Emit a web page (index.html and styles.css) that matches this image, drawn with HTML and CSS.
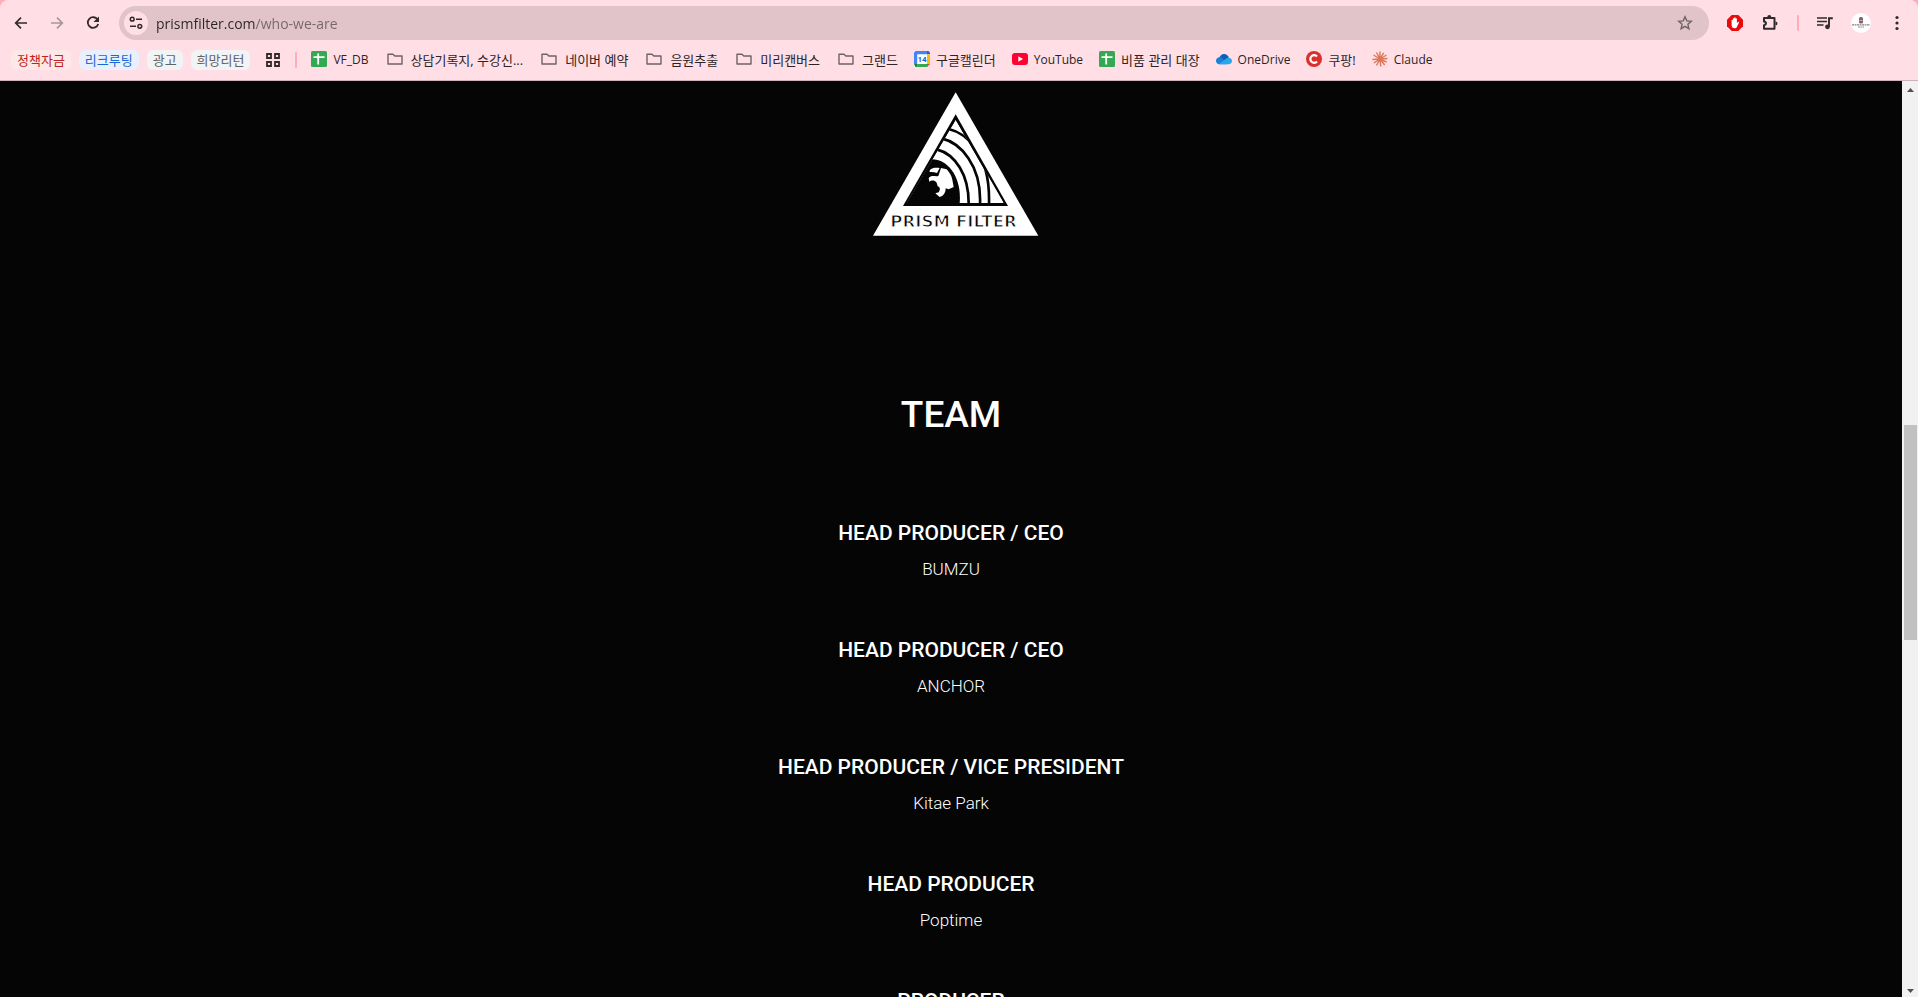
FILE: index.html
```
<!DOCTYPE html>
<html lang="ko">
<head>
<meta charset="utf-8">
<title>Prism Filter</title>
<link rel="stylesheet" href="styles.css">
</head>
<body>
<svg class="defs" aria-hidden="true">
  <symbol id="folder" viewBox="0 0 16 16"><path d="M1 3.2h5l1.8 1.8H15v8H1z" fill="none" stroke="#6d6366" stroke-width="1.4" stroke-linejoin="round"/></symbol>
  <symbol id="sheet" viewBox="0 0 16 16"><rect width="16" height="16" rx="1.5" fill="#34a853"/><path d="M2.5 6.2h11M7.2 2.5v11" stroke="#fff" stroke-width="1.8"/></symbol>
</svg>
<header class="chrome">
  <div class="toolbar">
    <nav class="nav">
      <button class="icon-btn" aria-label="뒤로"><svg viewBox="0 0 16 16"><path d="M14 8H3M8 2.700L2.700 8 8 13.300" fill="none" stroke="#302a2c" stroke-width="1.7"/></svg></button>
      <button class="icon-btn" aria-label="앞으로" disabled><svg viewBox="0 0 16 16"><path d="M2 8h11M8 2.700L13.300 8 8 13.300" fill="none" stroke="#a9959a" stroke-width="1.7"/></svg></button>
      <button class="icon-btn" aria-label="새로고침"><svg viewBox="0 0 16 16"><path d="M12.600 4.700A5.300 5.300 0 1 0 13.200 9" fill="none" stroke="#302a2c" stroke-width="1.8"/><path d="M14 1.500v5.500H8.500L14 1.500z" fill="#302a2c"/></svg></button>
    </nav>
    <form class="omnibox">
      <button type="button" class="site-info" aria-label="사이트 정보"><svg viewBox="0 0 16 16"><g fill="none" stroke="#302a2c" stroke-width="1.5"><circle cx="4.200" cy="4.200" r="1.900"/><path d="M8 4.200h6M2 11.300h6"/><circle cx="11.800" cy="11.300" r="1.900"/></g></svg></button>
      <input class="url" type="text" aria-label="주소" value="prismfilter.com/who-we-are">
      <button type="button" class="star" aria-label="북마크"><svg viewBox="0 0 16 16"><path d="M8 1.800l1.800 4.100 4.500.4-3.400 3 1 4.400L8 11.400l-3.900 2.300 1-4.400-3.400-3 4.500-.4z" fill="none" stroke="#6d6366" stroke-width="1.400"/></svg></button>
    </form>
    <div class="tools">
      <button class="icon-btn" aria-label="차단기"><svg viewBox="0 0 16 16"><path d="M4.700 0h6.600L16 4.700v6.600L11.300 16H4.700L0 11.300V4.700z" fill="#e90b0b"/><path d="M4.600 8V5.100a.7.7 0 0 1 1.300 0V3.600a.7.7 0 0 1 1.300 0V3a.7.7 0 0 1 1.400 0v.8a.7.7 0 0 1 1.300 0v4.400l1-1.200c.6-.6 1.400-.1 1.100.6l-2 4.200c-.5 1-1.200 1.500-2.300 1.500C5.600 13.300 4.600 12 4.600 10z" fill="#fff"/></svg></button>
      <button class="icon-btn extensions" aria-label="확장 프로그램"><svg viewBox="0 0 18 18"><path d="M3 4h10.500v10.800H3v-3.600c2.600-.4 2.600-3.400 0-3.800z" fill="none" stroke="#302a2c" stroke-width="2" stroke-linejoin="round"/><path d="M6.300 3a2 2 0 0 1 4 0zM14.500 7.500a2 2 0 0 1 0 4z" fill="#302a2c"/></svg></button>
      <span class="divider"></span>
      <button class="icon-btn" aria-label="미디어"><svg viewBox="0 0 16 16"><path d="M0 3h10M0 6.500h10M0 10h6.500" stroke="#302a2c" stroke-width="1.700"/><path d="M12 11.500V3.200h3.800" fill="none" stroke="#302a2c" stroke-width="1.900"/><circle cx="10.500" cy="11.800" r="2.400" fill="#302a2c"/></svg></button>
      <button class="icon-btn avatar" aria-label="프로필"><svg viewBox="0 0 20 20"><circle cx="10" cy="10" r="10" fill="#fff"/><rect x="8" y="4" width="4" height="6.500" rx="1.500" fill="#76676d"/><path d="M8.500 7.500h3" stroke="#e9a0ad"/><path d="M1 11.800h18M7 14h6" stroke="#87858a" stroke-width="1.200" stroke-dasharray="2 .5"/></svg></button>
      <button class="icon-btn" aria-label="메뉴"><svg viewBox="0 0 16 16" fill="#302a2c"><circle cx="8" cy="2.500" r="1.600"/><circle cx="8" cy="8" r="1.600"/><circle cx="8" cy="13.500" r="1.600"/></svg></button>
    </div>
  </div>
  <nav class="bookmarks">
    <button class="chip chip-red">정책자금</button>
    <button class="chip chip-blue">리크루팅</button>
    <button class="chip">광고</button>
    <button class="chip">희망리턴</button>
    <button class="apps" aria-label="탭 그룹"><svg viewBox="0 0 16 16"><path d="M2 2h4v4H2zM10 2h4v4h-4zM2 10h4v4H2zM10 10h4v4h-4z" fill="none" stroke="#302a2c" stroke-width="1.800"/></svg></button>
    <span class="divider"></span>
    <a class="mark first latin" href="#"><svg><use href="#sheet"/></svg>VF_DB</a>
    <a class="mark folder" href="#"><svg><use href="#folder"/></svg>상담기록지, 수강신...</a>
    <a class="mark folder" href="#"><svg><use href="#folder"/></svg>네이버 예약</a>
    <a class="mark folder" href="#"><svg><use href="#folder"/></svg>음원추출</a>
    <a class="mark folder" href="#"><svg><use href="#folder"/></svg>미리캔버스</a>
    <a class="mark folder" href="#"><svg><use href="#folder"/></svg>그랜드</a>
    <a class="mark" href="#"><svg viewBox="0 0 16 16"><path d="M0 0h14.500L16 1.500V12l-4 4H0z" fill="#fff"/><path d="M1.500 0H13v3.200H3.200V13H0V1.500z" fill="#4285f4"/><path d="M13 0h1.500L16 1.500v1.700h-3z" fill="#1967d2"/><path d="M13 3.200h3V13h-3z" fill="#fbbc04"/><path d="M3.200 13H13v3H3.200z" fill="#34a853"/><path d="M0 13h3.200v3H1.500z" fill="#188038"/><path d="M13 13h3l-3 3z" fill="#ea4335"/><text class="cal-day" x="8" y="11">14</text></svg>구글캘린더</a>
    <a class="mark latin" href="#"><svg viewBox="0 0 16 16"><rect y="2" width="16" height="12" rx="3" fill="#ff0033"/><path d="M6.300 5.300L11 8l-4.700 2.700z" fill="#fff"/></svg>YouTube</a>
    <a class="mark" href="#"><svg><use href="#sheet"/></svg>비품 관리 대장</a>
    <a class="mark latin" href="#"><svg viewBox="0 0 16 16"><path d="M3 8c.5-3 2.500-5 5-5 2.300 0 4 1.300 4.800 3.500L10 10H3z" fill="#0f5fb4"/><path d="M0 9.800C0 7.600 1.700 6.300 3.500 6.300c2.500 0 4 2 7.500 6.900H3.500C1.500 13.200 0 11.800 0 9.800z" fill="#1681d8"/><path d="M3 13l8-6c3-.8 5 .9 5 3.100 0 1.800-1.300 3.100-3.200 3.100H3.700z" fill="#28a8ea"/></svg>OneDrive</a>
    <a class="mark" href="#"><svg viewBox="0 0 16 16"><circle cx="8" cy="8" r="8" fill="#dc2f2b"/><path d="M11 5.500A3.800 3.800 0 1 0 11 10.500" fill="none" stroke="#fff" stroke-width="2.200"/></svg>쿠팡!</a>
    <a class="mark latin" href="#"><svg viewBox="0 0 16 16"><path d="M8 8V.5M8 8l3.700-6.200M8 8l6.500-4M8 8l7.500-.5M8 8l6.700 3.200M8 8l4.700 6M8 8l.8 7.500M8 8l-3.500 6.500M8 8l-6.200 4M8 8L.5 8.500M8 8L1.500 4M8 8L4.500 1.500" stroke="#d97757" stroke-width="1.400"/></svg>Claude</a>
  </nav>
</header>
<div class="viewport">
  <main class="page">
    <svg class="logo" viewBox="39 36 498 432" role="img" aria-label="Prism Filter">
      <path d="M287 37L535 467H39z" fill="#fff"/>
      <path d="M287 103L444 378H129z" fill="#050505"/>
      <clipPath id="inner"><path d="M287 119L431 369H140z"/></clipPath>
      <g clip-path="url(#inner)">
        <path d="M287 119L431 369H140z" fill="#fff"/>
        <path d="M318 160C345 200 375 245 388 280L440 369V300L330 140z" fill="#050505"/>
        <path d="M386 282L433 369H386z" fill="#fff"/>
        <g fill="none" stroke="#050505" stroke-width="8">
          <path d="M266 147C300 155 325 175 345 203C376 244 389 300 387 372"/>
          <path d="M247 176C300 188 365 255 360 372"/>
          <path d="M230 208C286 222 327 285 326 372"/>
        </g>
        <path d="M212 238C262 235 306 290 299 370H120z" fill="#050505"/>
      </g>
      <path d="M209 271C217 262 229 263 239 264L231 279C223 276 216 275 209 276zM243 264L260 268C270 280 275 288 277 299L281 321L266 328L257 325C257 339 250 349 239 351L231 344L226 340L236 337C243 327 239 321 233 319L230 308C221 298 214 302 208 305L206 294C214 285 225 290 235 288z" fill="#fff"/>
      <text class="logo-name" x="91" y="441">PRISM FILTER</text>
    </svg>
    <h1 class="title">TEAM</h1>
    <section class="member"><h2>HEAD PRODUCER / CEO</h2><p>BUMZU</p></section>
    <section class="member"><h2>HEAD PRODUCER / CEO</h2><p>ANCHOR</p></section>
    <section class="member"><h2>HEAD PRODUCER / VICE PRESIDENT</h2><p>Kitae Park</p></section>
    <section class="member"><h2>HEAD PRODUCER</h2><p>Poptime</p></section>
    <section class="member"><h2>PRODUCER</h2></section>
  </main>
  <div class="scrollbar" aria-hidden="true">
    <svg viewBox="0 0 16 17"><path d="M5 11l3.500-4L12 11z" fill="#505050"/></svg>
    <span class="above"></span><span class="thumb"></span><span class="below"></span>
    <svg viewBox="0 0 16 17"><path d="M5 9h7l-3.500 4z" fill="#505050"/></svg>
  </div>
</div>
</body>
</html>
```
FILE: styles.css
```
* { box-sizing: border-box; }
body {
  margin: 0;
  height: 100vh;
  display: flex;
  flex-direction: column;
  overflow: hidden;
  background: #ffabba;
  font-family: "Open Sans", "Noto Sans CJK KR", sans-serif;
}
button { border: 0; padding: 0; background: none; font: inherit; display: flex; align-items: center; justify-content: center; }
.defs { display: none; }
.chrome {
  flex: none;
  height: 81px;
  background: #ffdfe5;
  border-bottom: 1px solid #cdb2b8;
  border-radius: 8px 8px 0 0;
}
.toolbar { display: flex; align-items: center; padding: 6px 13px 0; }
.nav { display: flex; gap: 20px; }
.icon-btn { width: 16px; height: 16px; flex: none; }
.icon-btn svg, .site-info svg, .star svg, .apps svg { width: 16px; height: 16px; }
.icon-btn.extensions, .icon-btn.extensions svg { width: 18px; height: 18px; }
.icon-btn.avatar, .icon-btn.avatar svg { width: 20px; height: 20px; }
.omnibox {
  flex: 1;
  height: 34px;
  margin: 0 18px;
  padding: 0 16px 0 5px;
  display: flex;
  align-items: center;
  gap: 8px;
  border-radius: 17px;
  background: #e0c4ca;
}
.site-info { width: 24px; height: 24px; border-radius: 50%; background: #ffdfe5; }
.url {
  flex: 1;
  height: 24px;
  border: 0;
  padding: 0;
  outline: 0;
  font: 14px "Open Sans", sans-serif;
  color: transparent;
  background: linear-gradient(to right, #2b2426 99px, #75666a 99px);
  -webkit-background-clip: text;
  background-clip: text;
}
.tools { display: flex; align-items: center; gap: 18px; }
.divider { width: 2px; height: 16px; background: #ffabba; border-radius: 1px; }
.bookmarks { display: flex; align-items: center; height: 40px; padding-left: 11px; font-size: 13px; white-space: nowrap; }
.chip {
  height: 20px;
  padding: 0 6px 2px;
  margin-right: 8px;
  border-radius: 6px;
  background: #f1f3f4;
  color: #5f6368;
}
.chip-red { background: #fce8e6; color: #c5221f; }
.chip-blue { background: #e8f0fe; color: #1967d2; }
.apps { margin: 0 14px 0 7px; }
.mark { display: flex; align-items: center; gap: 6px; margin-left: 16px; padding-bottom: 2px; color: #2b2426; text-decoration: none; }
.mark.first { margin-left: 14px; }
.mark.folder { gap: 8px; margin-left: 18px; }
.mark.latin { font-size: 12px; }
.mark svg { width: 16px; height: 16px; flex: none; }
.cal-day { font: 700 8px Roboto, sans-serif; fill: #1967d2; text-anchor: middle; }
.viewport { flex: 1; min-height: 0; display: flex; }
.page {
  flex: 1;
  overflow: hidden;
  display: flex;
  flex-direction: column;
  align-items: center;
  padding-top: 11px;
  background: #050505;
  color: #fff;
  font-family: Roboto, sans-serif;
  text-align: center;
}
.logo { flex: none; width: 166px; height: 144px; margin-left: 10px; }
.logo-name { font: 700 50px "DejaVu Sans", sans-serif; fill: #050505; stroke: #fff; stroke-width: 3px; }
.title { margin: 155px 0 78px; font-size: 37px; font-weight: 500; line-height: 48px; }
.member { flex: none; margin-bottom: 52px; }
.member h2 { margin: 0 0 7px; font-size: 21px; font-weight: 500; line-height: 32px; }
.member p { margin: 0; font-size: 17px; font-weight: 300; line-height: 26px; }
.scrollbar { width: 16px; display: flex; flex-direction: column; background: #f1f1f1; }
.scrollbar svg { width: 16px; height: 17px; flex: none; }
.above { flex: 327; }
.thumb { flex: 215; margin: 0 1px 0 2px; background: #c1c1c1; }
.below { flex: 340; }
```
